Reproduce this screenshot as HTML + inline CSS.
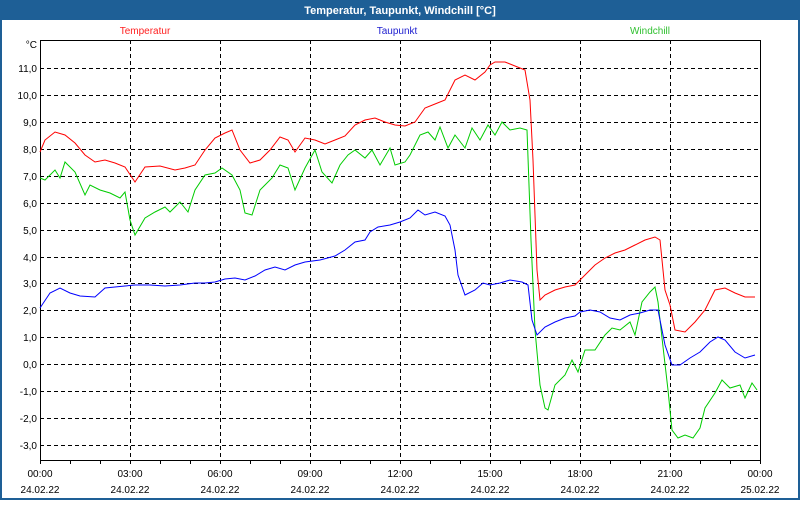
<!DOCTYPE html>
<html><head><meta charset="utf-8"><style>
body{margin:0;width:800px;height:500px;overflow:hidden;background:#fff;font-family:"Liberation Sans",sans-serif}
</style></head><body>
<svg width="800" height="500" xmlns="http://www.w3.org/2000/svg" font-family="Liberation Sans, sans-serif">
<rect x="0" y="0" width="800" height="500" fill="#1e5f96"/>
<rect x="2" y="20" width="796" height="478" fill="#fff"/>
<text x="400" y="14" font-size="11" font-weight="bold" fill="#fff" text-anchor="middle">Temperatur, Taupunkt, Windchill [°C]</text>
<text x="145" y="34" font-size="10" fill="#ff2020" text-anchor="middle">Temperatur</text>
<text x="397" y="34" font-size="10" fill="#2020d0" text-anchor="middle">Taupunkt</text>
<text x="650" y="34" font-size="10" fill="#30c030" text-anchor="middle">Windchill</text>
<g stroke="#000" stroke-dasharray="4,3" stroke-width="1">
<path d="M40 68.5H760M40 95.5H760M40 122.5H760M40 149.5H760M40 176.5H760M40 203.5H760M40 230.5H760M40 257.5H760M40 283.5H760M40 310.5H760M40 337.5H760M40 364.5H760M40 391.5H760M40 418.5H760M40 445.5H760"/>
<path d="M130.5 40V460M220.5 40V460M310.5 40V460M400.5 40V460M490.5 40V460M580.5 40V460M670.5 40V460"/>
</g>
<rect x="40.5" y="40.5" width="720" height="420" fill="none" stroke="#000"/>
<path d="M70.5 460v4M100.5 460v4M130.5 460v4M160.5 460v4M190.5 460v4M220.5 460v4M250.5 460v4M280.5 460v4M310.5 460v4M340.5 460v4M370.5 460v4M400.5 460v4M430.5 460v4M460.5 460v4M490.5 460v4M520.5 460v4M550.5 460v4M580.5 460v4M610.5 460v4M640.5 460v4M670.5 460v4M700.5 460v4M730.5 460v4M760.5 460v4M40.5 460v4" stroke="#000"/>
<g font-size="10" fill="#000" text-anchor="end">
<text x="37" y="48">°C</text>
<text x="37" y="72">11,0</text><text x="37" y="99">10,0</text><text x="37" y="126">9,0</text><text x="37" y="153">8,0</text><text x="37" y="180">7,0</text><text x="37" y="207">6,0</text><text x="37" y="234">5,0</text><text x="37" y="261">4,0</text><text x="37" y="287">3,0</text><text x="37" y="314">2,0</text><text x="37" y="341">1,0</text><text x="37" y="368">0,0</text><text x="37" y="395">-1,0</text><text x="37" y="422">-2,0</text><text x="37" y="449">-3,0</text>
</g>
<g font-size="10" fill="#000" text-anchor="middle">
<text x="40" y="477">00:00</text><text x="40" y="493">24.02.22</text>
<text x="130" y="477">03:00</text><text x="130" y="493">24.02.22</text>
<text x="220" y="477">06:00</text><text x="220" y="493">24.02.22</text>
<text x="310" y="477">09:00</text><text x="310" y="493">24.02.22</text>
<text x="400" y="477">12:00</text><text x="400" y="493">24.02.22</text>
<text x="490" y="477">15:00</text><text x="490" y="493">24.02.22</text>
<text x="580" y="477">18:00</text><text x="580" y="493">24.02.22</text>
<text x="670" y="477">21:00</text><text x="670" y="493">24.02.22</text>
<text x="760" y="477">00:00</text><text x="760" y="493">25.02.22</text>
</g>
<g fill="none" stroke-width="1">
<polyline stroke="#ff0000" points="40,152 45,140 55,132 65,135 75,143 85,155 95,162 105,160 115,163 125,167 135,182 145,167 160,166 175,170 185,168 195,165 205,150 215,138 225,133 232,130 240,150 250,163 260,160 270,150 280,137 288,140 295,152 305,138 315,140 325,144 335,140 345,136 355,125 365,120 375,118 385,122 395,125 405,126 415,122 425,108 435,104 445,100 455,80 465,75 475,80 485,72 490,65 495,62 505,62 515,66 525,70 530,100 533,160 537,270 540,300 545,295 555,290 565,287 575,285 585,275 595,265 605,258 615,253 625,250 635,245 645,240 655,237 660,240 665,290 670,305 675,330 685,332 695,322 705,310 715,290 725,288 735,293 745,297 755,297"/>
<polyline stroke="#00cc00" points="40,178 45,180 55,170 60,178 65,162 75,172 85,195 90,185 100,190 110,193 120,198 125,192 130,220 135,235 145,218 155,212 165,207 170,212 180,202 188,212 195,190 205,175 215,173 222,168 232,175 240,190 245,213 252,215 260,190 265,185 272,178 280,165 288,168 295,190 305,168 315,150 322,172 332,183 340,165 348,155 355,150 365,158 372,150 380,165 390,148 395,165 405,162 410,155 420,135 428,132 435,140 440,127 448,148 455,135 465,148 472,128 480,140 488,125 495,135 502,122 510,130 520,128 527,130 531,240 535,330 540,385 545,408 548,410 555,385 565,375 572,360 578,372 585,350 595,350 605,335 612,328 620,330 630,322 635,335 642,302 650,292 655,287 658,302 662,338 668,390 672,430 678,438 685,435 693,438 700,428 705,408 715,393 722,380 730,388 740,385 745,398 752,383 757,390"/>
<polyline stroke="#0000ff" points="40,308 50,293 60,288 70,293 80,296 95,297 105,288 115,287 125,286 135,285 150,285 165,286 180,285 195,283 205,283 215,282 225,279 235,278 245,280 255,276 265,270 275,267 285,270 295,265 305,262 320,260 335,256 345,250 355,242 365,240 370,232 378,227 390,225 400,222 410,218 418,210 425,215 435,212 445,216 450,225 455,250 458,275 465,295 475,290 483,283 490,285 500,283 510,280 522,282 528,285 532,320 537,335 545,327 555,322 565,318 575,316 580,312 590,310 600,312 610,318 620,320 630,315 640,313 650,310 658,310 665,345 672,365 680,365 690,358 700,352 710,342 718,337 725,340 735,352 745,358 755,355"/>
</g>
</svg>
</body></html>
